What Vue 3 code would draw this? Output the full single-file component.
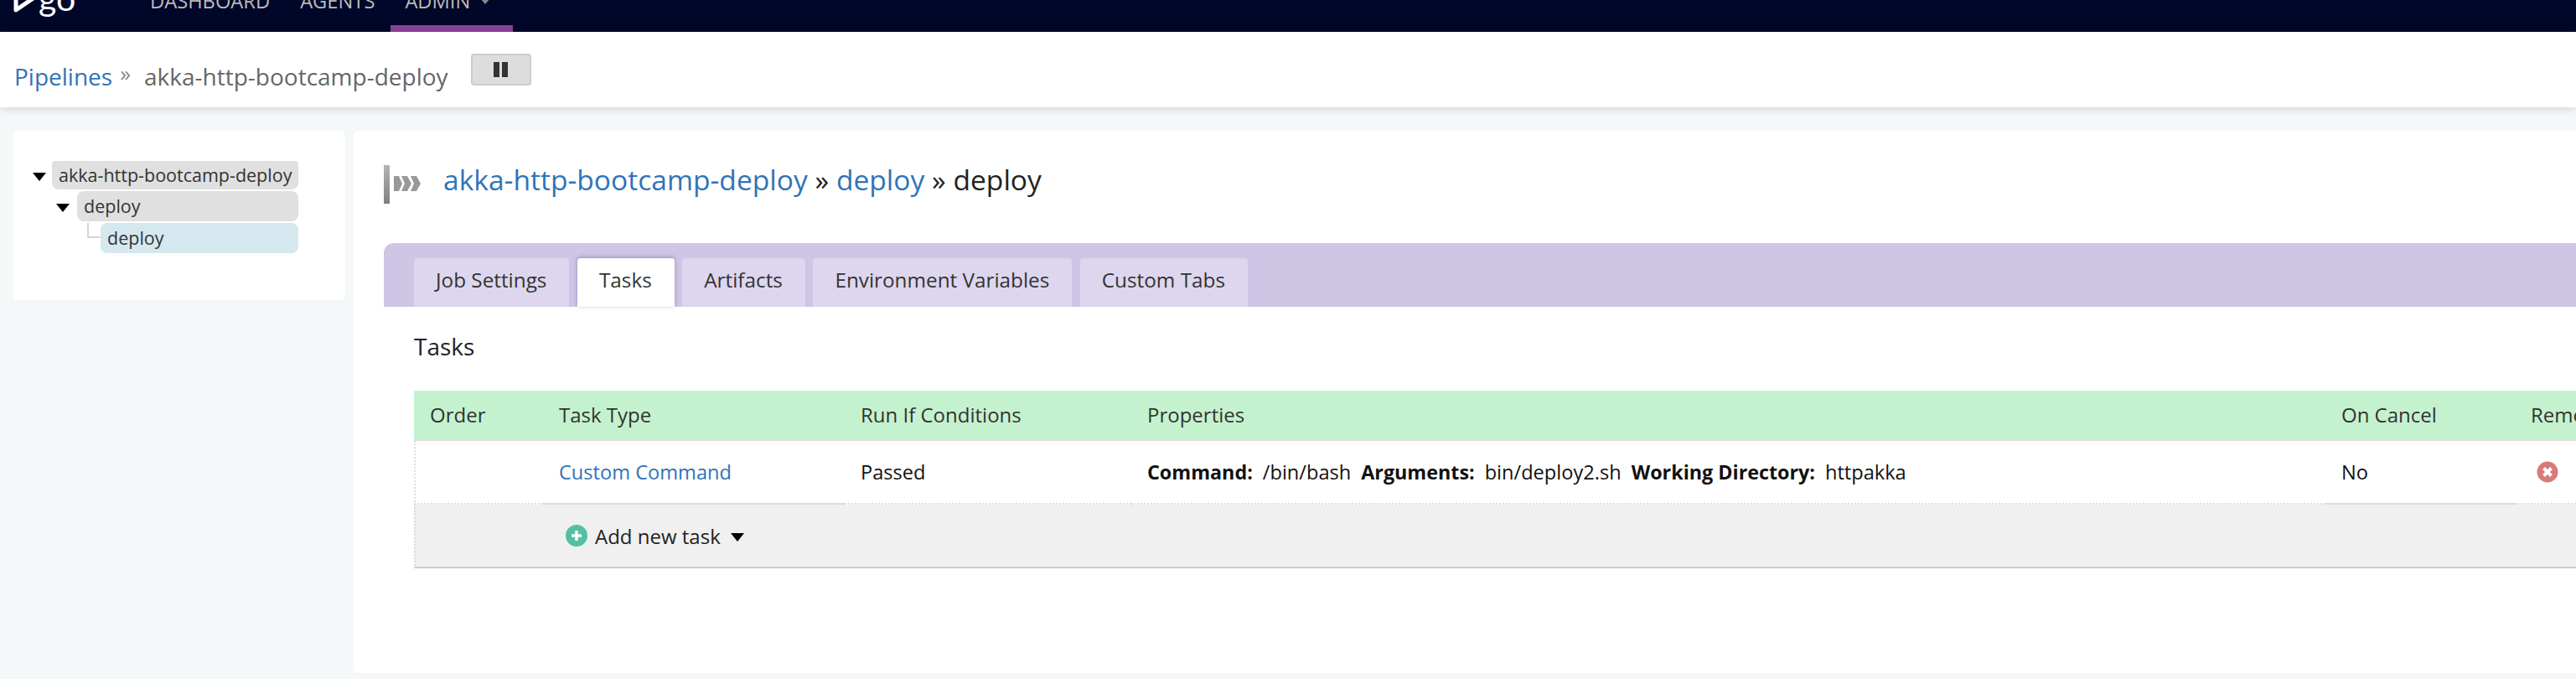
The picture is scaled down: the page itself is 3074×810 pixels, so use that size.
<template>
  <div class="page">
    <header class="topnav">
      <div class="logo">
        <svg class="logo-mark" width="26" height="24" viewBox="0 0 26 24">
          <path d="M3 -8 V12 L25 -3" fill="none" stroke="#fff" stroke-width="5" stroke-linejoin="round" />
        </svg>
        <span class="logo-text">go</span>
      </div>
      <nav class="menu">
        <a class="menu-item">DASHBOARD</a>
        <a class="menu-item">AGENTS</a>
        <a class="menu-item active">ADMIN<i class="menu-caret"></i></a>
      </nav>
    </header>

    <div class="subheader">
      <a class="link">Pipelines</a>
      <span class="crumb-sep">»</span>
      <span class="crumb-name">akka-http-bootcamp-deploy</span>
      <button class="pause-btn"><i></i><i></i></button>
    </div>

    <div class="content">
      <aside class="side">
        <div class="tree-row">
          <i class="tree-caret"></i>
          <span class="tree-label grey first">akka-http-bootcamp-deploy</span>
        </div>
        <div class="tree-row lvl1">
          <i class="tree-caret"></i>
          <span class="tree-label grey">deploy</span>
        </div>
        <div class="tree-row lvl2">
          <i class="tree-elbow"></i>
          <span class="tree-label blue">deploy</span>
        </div>
      </aside>

      <main class="main">
        <div class="title">
          <svg class="title-icon" width="52" height="46" viewBox="0 0 52 46">
            <defs>
              <linearGradient id="bar" x1="0" y1="0" x2="0" y2="1">
                <stop offset="0" stop-color="#b4b4b4" />
                <stop offset="1" stop-color="#808080" />
              </linearGradient>
            </defs>
            <rect x="0" y="0" width="7" height="46" fill="url(#bar)" />
            <g class="chevrons">
              <path d="M12 13 h6 l4 9 l-4 9 h-6 z" fill="#999" />
              <path d="M21 13 h7 l5 9 l-5 9 h-7 l4 -9 z" fill="#999" />
              <path d="M32 13 h7 l5 9 l-5 9 h-7 l4 -9 z" fill="#999" />
            </g>
          </svg>
          <h1 class="title-text">
            <a class="link">akka-http-bootcamp-deploy</a> » <a class="link">deploy</a> » deploy
          </h1>
        </div>

        <div class="tabs">
          <a v-for="t in tabs" :key="t" class="tab" :class="{ current: t === 'Tasks' }">{{ t }}</a>
        </div>

        <div class="tab-body">
          <h2 class="section-title">Tasks</h2>
          <table class="tasks">
            <thead>
              <tr>
                <th class="c-order">Order</th>
                <th class="c-type">Task Type</th>
                <th class="c-run">Run If Conditions</th>
                <th class="c-props">Properties</th>
                <th class="c-cancel">On Cancel</th>
                <th class="c-remove">Remove</th>
              </tr>
            </thead>
            <tbody>
              <tr>
                <td></td>
                <td class="solid"><a class="link">Custom Command</a></td>
                <td>Passed</td>
                <td class="props">
                  <b>Command:</b><span>/bin/bash</span><b>Arguments:</b><span>bin/deploy2.sh</span><b>Working Directory:</b><span>httpakka</span>
                </td>
                <td class="solid">No</td>
                <td>
                  <svg class="remove-icon" width="26" height="26" viewBox="0 0 26 26">
                    <circle cx="13" cy="13" r="12.5" fill="#d97b79" />
                    <path d="M8.5 8.5 L17.5 17.5 M17.5 8.5 L8.5 17.5" stroke="#fff" stroke-width="4" />
                  </svg>
                </td>
              </tr>
              <tr class="add-row">
                <td></td>
                <td colspan="5">
                  <div class="add-task">
                    <svg width="26" height="26" viewBox="0 0 26 26">
                      <circle cx="13" cy="13" r="13" fill="#55bfa5" />
                      <path d="M13 7 V19 M7 13 H19" stroke="#fff" stroke-width="3.4" />
                    </svg>
                    <span>Add new task</span>
                    <i class="add-caret"></i>
                  </div>
                </td>
              </tr>
            </tbody>
          </table>
        </div>
      </main>
    </div>
  </div>
</template>

<script setup>
const tabs = ['Job Settings', 'Tasks', 'Artifacts', 'Environment Variables', 'Custom Tabs']
</script>

<style>
html, body { margin: 0; overflow: hidden; background: #f4f8f9; }
</style>

<style scoped>
.page {
  width: 3074px;
  height: 810px;
  overflow: hidden;
  font-family: "Open Sans", "Noto Sans", sans-serif;
  color: #333;
  background: #f4f8f9;
}

.link { color: #2f74b8; text-decoration: none; }

/* top nav */
.topnav {
  height: 38px;
  background: #000728;
  display: flex;
  overflow: hidden;
}
.logo {
  width: 179px;
  height: 38px;
  display: flex;
  padding-left: 16px;
  box-sizing: border-box;
}
.logo-mark { flex: none; }
.logo-text {
  color: #fff;
  font-size: 41px;
  line-height: 44px;
  margin: -24px 0 0 4px;
  font-family: "Lato", sans-serif;
  font-weight: 400;
}
.menu { display: flex; }
.menu-item {
  height: 30px;
  line-height: 30px;
  margin-top: -14px;
  margin-right: 36px;
  font-size: 23.7px;
  color: #bbb;
}
.menu-item.active {
  position: relative;
  margin-left: -17px;
  padding: 0 51px 0 17px;
  height: 44px;
  border-bottom: 8px solid #8b4298;
}
.menu-caret {
  position: absolute;
  left: 107px;
  top: 12px;
  border: 6px solid transparent;
  border-top: 7px solid #888;
  border-bottom: 0;
}

/* pipeline breadcrumb */
.subheader {
  height: 90px;
  background: #fff;
  box-shadow: 0 2px 10px rgba(0, 0, 0, 0.15);
  position: relative;
  display: flex;
  align-items: flex-start;
  padding-left: 17px;
  font-size: 28px;
  line-height: 38px;
}
.subheader .link { margin-top: 34px; }
.crumb-sep { margin: 30px 0 0 9px; color: #888; font-size: 26px; }
.crumb-name { margin: 34px 0 0 16px; color: #666; }
.pause-btn {
  margin: 26px 0 0 27px;
  width: 72px;
  height: 38px;
  padding: 0;
  background: #ddd;
  border: 2px solid #ccc;
  border-radius: 4px;
  display: flex;
  align-items: center;
  justify-content: center;
  gap: 3px;
}
.pause-btn i { width: 7px; height: 18px; background: #333; }

/* body */
.content {
  display: flex;
  padding-top: 28px;
  align-items: flex-start;
}
.side {
  width: 396px;
  height: 202px;
  margin-left: 16px;
  padding-top: 36px;
  box-sizing: border-box;
  background: #fff;
  border-radius: 6px;
}
.tree-row {
  display: flex;
  align-items: center;
  margin: 0 56px 2px 23px;
  font-size: 21.5px;
  color: #333;
}
.tree-row.lvl1 { margin-left: 51px; }
.tree-row.lvl2 { margin-left: 88px; position: relative; }
.tree-caret {
  flex: none;
  width: 0;
  height: 0;
  margin-right: 7px;
  border: 8px solid transparent;
  border-top: 10px solid #000;
  border-bottom: 0;
  margin-top: 3px;
}
.lvl1 .tree-caret { margin-right: 9px; }
.lvl2 .tree-label { margin-left: 16px; }
.tree-label {
  flex: 1;
  height: 36px;
  line-height: 35px;
  padding-left: 8px;
  border-radius: 8px;
  white-space: nowrap;
}
.tree-label.first { height: 34px; line-height: 33px; border-radius: 4px 4px 8px 8px; }
.tree-label.grey { background: #e0e0e0; }
.tree-label.blue { background: #d5e8ef; }
.tree-elbow {
  position: absolute;
  left: 0;
  top: 0;
  width: 14px;
  height: 16px;
  border-left: 2px solid #d4d4d4;
  border-bottom: 2px solid #d4d4d4;
}

.main {
  flex: none;
  width: 2652px;
  height: 647px;
  margin-left: 10px;
  background: #fff;
  border-radius: 6px 0 0 6px;
  padding: 41px 0 0 36px;
  box-sizing: border-box;
}
.title { display: flex; align-items: center; height: 46px; }
.title-icon { flex: none; margin-right: 19px; }
.chevrons { filter: blur(0.5px); }
.title-text {
  margin: -12px 0 0;
  font-size: 33.6px;
  font-weight: 400;
  color: #222;
  white-space: nowrap;
}

.tabs {
  margin-top: 47px;
  height: 76px;
  background: #cfc5e5;
  border-radius: 12px 0 0 0;
  display: flex;
  align-items: flex-end;
  padding-left: 36px;
  gap: 9.5px;
}
.tab {
  height: 58px;
  line-height: 52px;
  padding: 0 27px 0 26px;
  background: #ddd6ee;
  border-radius: 4px 4px 0 0;
  font-size: 24.3px;
  color: #333;
}
.tab.current {
  background: #fff;
  box-shadow: 0 -1px 5px rgba(60, 40, 120, 0.35);
}

.tab-body { padding-left: 36px; }
.section-title {
  margin: 0;
  height: 100px;
  line-height: 94px;
  font-size: 28px;
  font-weight: 400;
  color: #222;
}

.tasks {
  border-collapse: separate;
  border-spacing: 0;
  table-layout: fixed;
  width: 2700px;
  font-size: 23.6px;
}
.tasks th {
  box-sizing: border-box;
  height: 60px;
  padding: 0 0 2px 19px;
  background: #c5f2ce;
  font-size: 24px;
  font-weight: 400;
  text-align: left;
  color: #333;
  border-bottom: 2px solid #ddd;
  white-space: nowrap;
}
.c-order { width: 154px; }
.c-type { width: 360px; }
.c-run { width: 342px; }
.c-props { width: 1425px; }
.c-cancel { width: 226px; }
.tasks td {
  box-sizing: border-box;
  height: 76px;
  padding: 0 0 0 19px;
  color: #111;
  border-bottom: 2px dotted #ddd;
}
.tasks td:first-child { border-left: 2px dotted #ddd; }
.tasks td.solid { border-bottom-style: solid; }
.props b { color: #111; font-size: 23.3px; }
.props span { margin: 0 12px; }
.remove-icon { display: block; margin-left: 7px; }
.tasks .add-row td {
  background: #f0f0f0;
  border-bottom: 2px solid #ccc;
}
.add-task { display: flex; align-items: center; color: #222; padding-left: 8px; font-size: 24px; }
.add-task span { margin-left: 9px; }
.add-caret {
  margin-left: 12px;
  border: 8px solid transparent;
  border-top: 10px solid #000;
  border-bottom: 0;
  margin-top: 3px;
}
</style>
